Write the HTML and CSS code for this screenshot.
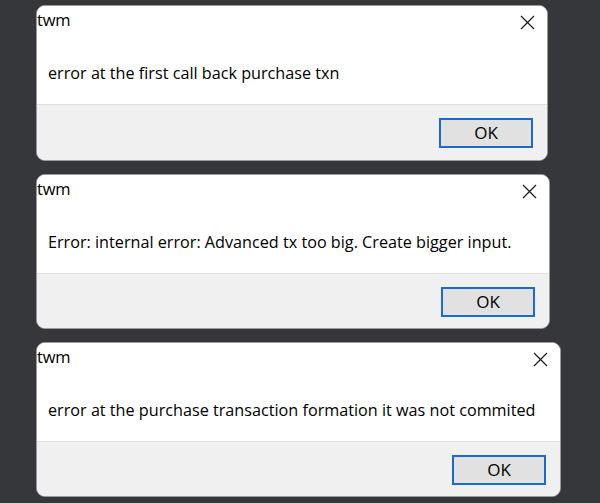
FILE: index.html
```html
<!DOCTYPE html>
<html>
<head>
<meta charset="utf-8">
<link rel="stylesheet" href="styles.css">
</head>
<body>
<div class="stack">
  <div class="dialog d1">
    <div class="main">
      <div class="titlebar">
        <span class="title">twm</span>
        <svg class="close" width="15" height="15" viewBox="0 0 15 15"><path d="M1 1L14 14M14 1L1 14" stroke="#1a1a1a" stroke-width="1.2" fill="none"/></svg>
      </div>
      <div class="msg">error at the first call back purchase txn</div>
    </div>
    <div class="footer"><button class="ok">OK</button></div>
  </div>
  <div class="dialog d2">
    <div class="main">
      <div class="titlebar">
        <span class="title">twm</span>
        <svg class="close" width="15" height="15" viewBox="0 0 15 15"><path d="M1 1L14 14M14 1L1 14" stroke="#1a1a1a" stroke-width="1.2" fill="none"/></svg>
      </div>
      <div class="msg">Error: internal error: Advanced tx too big. Create bigger input.</div>
    </div>
    <div class="footer"><button class="ok">OK</button></div>
  </div>
  <div class="dialog d3">
    <div class="main">
      <div class="titlebar">
        <span class="title">twm</span>
        <svg class="close" width="15" height="15" viewBox="0 0 15 15"><path d="M1 1L14 14M14 1L1 14" stroke="#1a1a1a" stroke-width="1.2" fill="none"/></svg>
      </div>
      <div class="msg">error at the purchase transaction formation it was not commited</div>
    </div>
    <div class="footer"><button class="ok">OK</button></div>
  </div>
</div>
</body>
</html>
```
FILE: styles.css
```css
html, body {
  margin: 0;
  padding: 0;
  background: #36373b;
  width: 600px;
  height: 503px;
  overflow: hidden;
  font-family: "Open Sans", "Noto Sans", sans-serif;
  color: #000;
}
.stack {
  display: flex;
  flex-direction: column;
  gap: 13px;
  padding: 5px 0 0 36px;
}
.dialog {
  box-sizing: border-box;
  height: 156px;
  border: 1px solid #9a9a9a;
  border-radius: 9px;
  overflow: hidden;
  display: flex;
  flex-direction: column;
  background: #fff;
}
.d1 { width: 512px; }
.d2 { width: 514px; height: 155px; }
.d3 { width: 525px; height: 155px; }
.main {
  height: 98px;
  display: flex;
  flex-direction: column;
  background: #fff;
}
.titlebar {
  display: flex;
  justify-content: space-between;
  align-items: flex-start;
  padding: 3px 12px 0 0;
  height: 25px;
}
.title {
  font-size: 16.5px;
  line-height: 22px;
  letter-spacing: -0.2px;
}
.close {
  margin-top: 6px;
}
.msg {
  margin-top: 28px;
  padding-left: 11px;
  font-size: 16.2px;
  line-height: 22px;
}
.footer {
  flex: 1;
  background: #f0f0f0;
  border-top: 1px solid #dfdfdf;
  display: flex;
  justify-content: flex-end;
  align-items: flex-start;
  padding: 13px 14px 0 0;
}
.ok {
  width: 94px;
  height: 30px;
  box-sizing: border-box;
  border: 2px solid #1a6ad0;
  background: #e1e1e1;
  font-family: "Open Sans", "Noto Sans", sans-serif;
  font-size: 17px;
  line-height: 24px;
  color: #000;
  padding: 0;
  margin: 0;
}
```
